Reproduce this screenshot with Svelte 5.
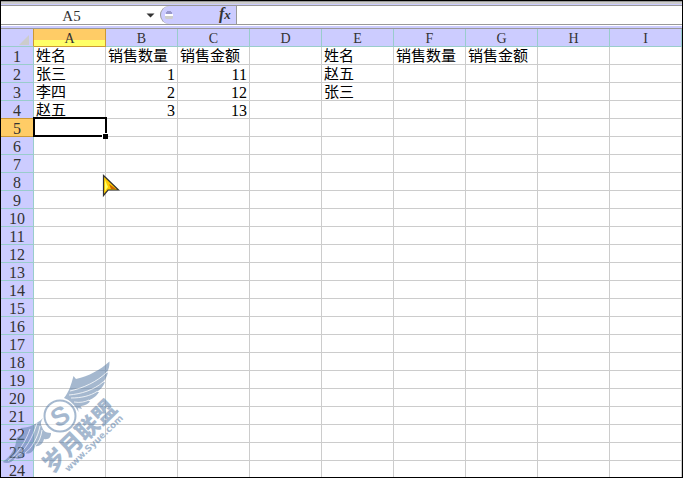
<script lang="ts">
  const columns = ['A', 'B', 'C', 'D', 'E', 'F', 'G', 'H', 'I'];
  const rows = Array.from({ length: 24 }, (_, i) => i + 1);

  const cells: Record<string, string | number> = {
    A1: '姓名', B1: '销售数量', C1: '销售金额',
    A2: '张三', B2: 1, C2: 11,
    A3: '李四', B3: 2, C3: 12,
    A4: '赵五', B4: 3, C4: 13,
    E1: '姓名', F1: '销售数量', G1: '销售金额',
    E2: '赵五',
    E3: '张三',
  };

  let activeColumn = $state('A');
  let activeRow = $state(5);
  let active = $derived(activeColumn + activeRow);

  function select(column: string, row: number) {
    activeColumn = column;
    activeRow = row;
  }
</script>

<div class="window">
  <div class="strip"></div>
  <div class="formula-bar">
    <div class="name-box">
      <input class="name" aria-label="Name box" value={active} readonly />
      <button class="arrow" aria-label="Show names">
        <svg width="9" height="5" viewBox="0 0 9 5"><path d="M0.5 0.5h8L4.5 4.5z" fill="#333" /></svg>
      </button>
    </div>
    <div class="tools">
      <svg class="grip" width="10" height="10" viewBox="0 0 10 10">
        <path d="M3 1h4v1h1v2H2V2h1z" fill="#99c" />
        <path d="M1 4h8v2H1z" fill="#fff" />
        <path d="M1 6h8v2L8 9H2L1 8z" fill="#ccc" />
      </svg>
      <button class="fx" aria-label="Insert function"><i>f</i><i class="x">x</i></button>
    </div>
    <input class="formula" aria-label="Formula" />
  </div>
  <div class="gap"></div>

  <div class="sheet">
    <table>
      <thead>
        <tr>
          <th class="corner">
            <svg width="10" height="10" viewBox="0 0 10 10"><path d="M10 0v10H0z" fill="#ccc" /></svg>
          </th>
          {#each columns as column}
            <th class:active={column === activeColumn}>{column}</th>
          {/each}
        </tr>
      </thead>
      <tbody>
        {#each rows as row}
          <tr>
            <th class:active={row === activeRow} class:before={row === activeRow - 1}>{row}</th>
            {#each columns as column}
              {@const value = cells[column + row]}
              <td class:number={typeof value === 'number'} onclick={() => select(column, row)}>
                {value ?? ''}
                {#if column + row === active}
                  <span class="selection"></span>
                {/if}
              </td>
            {/each}
          </tr>
        {/each}
      </tbody>
    </table>

    <svg class="pointer" width="18" height="24" viewBox="0 0 18 24">
      <path d="M1.5 1.5v20l4.5-5.5h10.5z" fill="#fc0" stroke="#333" stroke-width="1.2" />
      <path d="M3 6v11l3-4z" fill="#ff6" />
      <path d="M7 10l7 5H9z" fill="#c60" />
    </svg>

    <svg class="watermark" width="130" height="120" viewBox="0 0 130 120">
      <g fill="#5c7fa8">
        <path d="M63 41C68 35 70 28 72.500 19L75 22C88 19 99 13 108.500 4.500C108.500 9 108 12 105.500 16L107 15.500C106 20 104 23 101.500 25.500L104 25C102 30 99 33 95.500 35L98 35C95 40 91 42 87 43.500L89 44.500C86 48 82 49 79.500 49L81 52L77 51L77.500 55C74 48 69 43 63 41z" />
        <path d="M42 61C40 64 39 67 41 70C42 73 44 76 50 76C50 80 48 83 43 82C42 87 38 90 34 89C33 95 28 98 24 96C22 102 17 103 14 101C11 106 6 107 1.500 105C10 99 15 91 15.500 81L24 75L19 71C28 71 36 67 42 61z" />
      </g>
      <g fill="none" stroke="#fff" stroke-width="0.8">
        <path d="M69 34C82 31 96 25 106 15M68 38C80 37 93 33 102 25M70 41C80 41 89 39 96 34.500M73 45C79 46 84 45 88 43" />
        <path d="M36 66C32 80 24 94 14 101M39 69C37 80 31 91 24 96M41 73C40 80 38 85 34 89M29 72C25 84 17 97 7 104" />
      </g>
      <circle cx="59" cy="59" r="15.500" fill="#fff" stroke="#5c7fa8" stroke-width="2" />
      <text class="logo-s" x="59" y="68" text-anchor="middle" transform="rotate(-30 59 59)">S</text>
      <g transform="translate(51 117) rotate(-44)">
        <text class="logo-name" x="0" y="0">岁月联盟</text>
        <text class="logo-url" x="13" y="10">www.Syue.com</text>
      </g>
    </svg>
  </div>
</div>

<style>
  .window {
    box-sizing: border-box;
    height: 100vh;
    display: flex;
    flex-direction: column;
    border: 1px solid #000;
    background: #fff;
    overflow: hidden;
    font-family: "Liberation Serif", "Noto Sans CJK SC", serif;
    color: #000;
  }

  button,
  input {
    box-sizing: border-box;
    min-width: 0;
    margin: 0;
    padding: 0;
    border: 0;
    background: none;
    color: #333;
    font: inherit;
    outline: none;
  }

  .strip {
    flex: none;
    height: 2px;
    border-top: 1px solid #999;
    border-bottom: 1px solid #ccf;
    background: #ccc;
  }

  .formula-bar {
    flex: none;
    display: flex;
    height: 18px;
    border-top: 1px solid #999;
    border-bottom: 1px solid #999;
  }

  .name-box {
    display: flex;
    width: 159px;
  }

  .name {
    width: 141px;
    padding-top: 2px;
    font-size: 15px;
    line-height: 16px;
    text-align: center;
  }

  .arrow {
    display: flex;
    align-items: center;
    justify-content: center;
    width: 17px;
  }

  .tools {
    box-sizing: border-box;
    display: flex;
    align-items: center;
    justify-content: space-between;
    width: 77px;
    padding: 0 3px;
    border-left: 1px solid #999;
    border-right: 1px solid #999;
    border-radius: 9px 0 0 9px;
    background: #ccf;
  }

  .fx {
    display: flex;
    width: 14px;
    font-size: 16px;
    font-weight: bold;
    line-height: 18px;
  }

  .fx .x {
    font-size: 13px;
    line-height: 20px;
  }

  .formula {
    flex: 1;
    padding: 0 4px;
  }

  .gap {
    flex: none;
    height: 2px;
    border-top: 1px solid #fff;
    border-bottom: 1px solid #999;
    background: #ccf;
  }

  .sheet {
    position: relative;
    flex: 1;
    min-height: 0;
    overflow: hidden;
  }

  table {
    width: 100%;
    table-layout: fixed;
    border-collapse: separate;
    border-spacing: 0;
  }

  th,
  td {
    box-sizing: border-box;
    height: 18px;
    padding: 2px 2px 0;
    border-right: 1px solid #ccc;
    border-bottom: 1px solid #ccc;
    line-height: 15px;
    white-space: nowrap;
  }

  th {
    border-color: #9cc;
    background: #ccf;
    color: #333;
    font-size: 16px;
    font-weight: normal;
    text-align: center;
  }

  thead th {
    font-size: 14px;
  }

  thead .active {
    border-color: #c93;
    background: linear-gradient(#fc6 11px, #ff6 11px);
  }

  tbody .active {
    border-color: #c93;
    background: #fc6;
  }

  tbody .before {
    border-bottom-color: #c93;
  }

  .corner {
    width: 33px;
    border-right-color: #c93;
  }

  .corner svg {
    display: block;
    margin: 2px 2px 0 auto;
  }

  td {
    position: relative;
    font-size: 15px;
  }

  .number {
    font-size: 16px;
    text-align: right;
  }

  .selection {
    position: absolute;
    z-index: 1;
    inset: -2px -2px -1px -1px;
    border: 2px solid #000;
  }

  .selection::after {
    content: "";
    position: absolute;
    right: -3px;
    bottom: -4px;
    width: 5px;
    height: 5px;
    background: #000;
    box-shadow: -1px -1px 0 #fff;
  }

  .pointer {
    position: absolute;
    left: 101px;
    top: 145px;
  }

  .watermark {
    position: absolute;
    left: 0;
    bottom: 0;
    opacity: 0.55;
    pointer-events: none;
  }

  .logo-s {
    fill: #5c7fa8;
    font-family: "Liberation Sans", sans-serif;
    font-size: 26px;
    font-weight: bold;
  }

  .logo-name {
    fill: #5c7fa8;
    font-family: "Noto Sans CJK SC", sans-serif;
    font-size: 23px;
    font-weight: 900;
  }

  .logo-url {
    fill: #5c7fa8;
    font-family: "DejaVu Sans", sans-serif;
    font-size: 9px;
    font-weight: bold;
  }
</style>
